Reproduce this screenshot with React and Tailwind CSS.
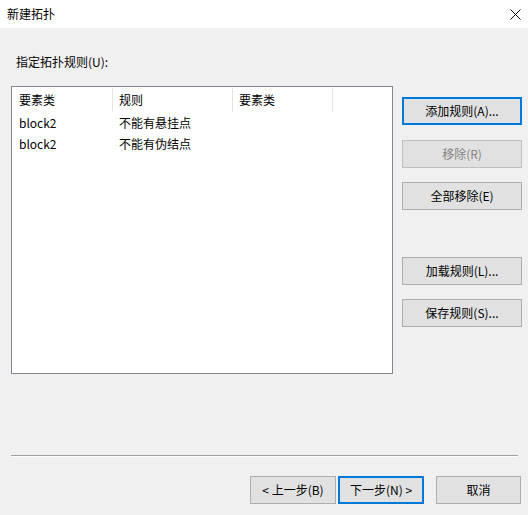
import React from "react";

const font = { fontFamily: '"Noto Sans CJK SC", "Noto Sans", sans-serif' };

function Btn({ children, primary, disabled, className = "" }) {
  let cls =
    "h-[28px] flex items-center justify-center text-[12px] leading-none bg-[#e1e1e1] ";
  if (primary) cls += "border-2 border-[#0078d7] text-black ";
  else if (disabled) cls += "border border-[#bfbfbf] bg-[#cccccc] text-[#838383] ";
  else cls += "border border-[#adadad] text-black ";
  return <div className={cls + className}>{children}</div>;
}

const rows = [
  ["block2", "不能有悬挂点", ""],
  ["block2", "不能有伪结点", ""],
];

export default function App() {
  return (
    <div className="w-[528px] h-[515px] bg-[#f0f0f0] flex flex-col text-black" style={font}>
      {/* 标题栏 */}
      <div className="h-[28px] bg-white flex items-center justify-between pl-[7px] pr-[6px]">
        <span className="text-[12px]">新建拓扑</span>
        <svg width="11" height="11" viewBox="0 0 11 11" className="mr-[1px]">
          <path d="M0.5 0.5 L10.5 10.5 M10.5 0.5 L0.5 10.5" stroke="#000" strokeWidth="1" />
        </svg>
      </div>

      <div className="pl-[16px] pt-[26px] h-[58px] text-[12px] leading-[16px]">指定拓扑规则(U):</div>

      <div className="flex">
        {/* 规则列表 */}
        <div className="ml-[11px] w-[382px] h-[288px] bg-white border border-[#828790] text-[12px]">
          <div className="flex h-[25px] items-center">
            <div className="w-[101px] h-[24px] flex items-center pl-[7px] border-r border-[#e5e5e5]">要素类</div>
            <div className="w-[120px] h-[24px] flex items-center pl-[6px] border-r border-[#e5e5e5]">规则</div>
            <div className="w-[100px] h-[24px] flex items-center pl-[6px] border-r border-[#e5e5e5]">要素类</div>
          </div>
          {rows.map((r, i) => (
            <div key={i} className="flex h-[21px] items-center">
              <div className="w-[101px] pl-[7px]">{r[0]}</div>
              <div className="w-[120px] pl-[6px]">{r[1]}</div>
              <div className="w-[100px] pl-[6px]">{r[2]}</div>
            </div>
          ))}
        </div>

        {/* 右侧按钮 */}
        <div className="ml-[9px] w-[120px] pt-[11px] flex flex-col">
          <Btn primary>添加规则(A)...</Btn>
          <Btn disabled className="mt-[15px]">移除(R)</Btn>
          <Btn className="mt-[14px]">全部移除(E)</Btn>
          <Btn className="mt-[47px]">加载规则(L)...</Btn>
          <Btn className="mt-[14px]">保存规则(S)...</Btn>
        </div>
      </div>

      <div className="mt-[81px] ml-[11px] w-[507px] h-[2px] border-t border-[#a0a0a0] border-b border-b-white" />

      <div className="mt-[19px] flex pl-[250px]">
        <Btn className="w-[86px]">&lt; 上一步(B)</Btn>
        <Btn primary className="ml-[2px] w-[86px]">下一步(N) &gt;</Btn>
        <Btn className="ml-[12px] w-[85px]">取消</Btn>
      </div>
    </div>
  );
}
